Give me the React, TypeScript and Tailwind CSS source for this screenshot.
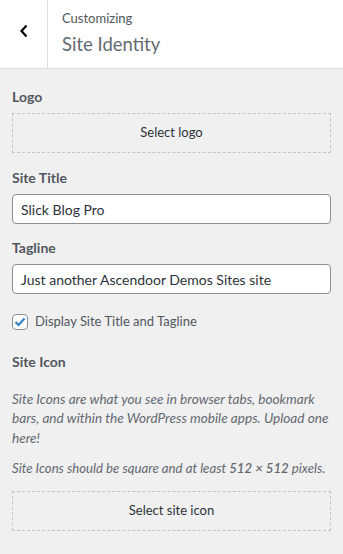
import React from "react";

const font = { fontFamily: 'Lato, "Noto Sans", sans-serif' };

export default function App() {
  return (
    <div className="w-[343px] h-[554px] bg-[#f0f0f1] overflow-hidden text-[#3c434a]" style={font}>
      <div className="flex h-[69px] bg-white border-b border-[#dcdcde]">
        <div className="w-[48px] flex items-center justify-center border-r border-[#dcdcde] pb-[6px]">
          <svg width="10" height="14" viewBox="0 0 10 14">
            <path d="M7.5 1.5 L2.5 7 L7.5 12.5" fill="none" stroke="#000" strokeWidth="2.2" />
          </svg>
        </div>
        <div className="flex flex-col pl-[14px] pt-[9px]">
          <span className="text-[13px] leading-[18px] text-[#50575e]">Customizing</span>
          <span className="text-[18.5px] leading-[26px] mt-[4px] text-[#646970]">Site Identity</span>
        </div>
      </div>
      <div className="px-[12px] pt-[18px]">
        <div className="text-[14px] font-bold leading-[20px] text-[#50575e]">Logo</div>
        <div className="mt-[6px] h-[40px] border border-dashed border-[#c3c4c7] flex items-center justify-center text-[13px] text-[#2c3338]">
          Select logo
        </div>
        <div className="mt-[15px] text-[14px] font-bold leading-[20px] text-[#50575e]">Site Title</div>
        <div className="mt-[6px] h-[30px] bg-white border border-[#8c8f94] rounded-[4px] flex items-center px-[8px] text-[14px] text-[#2c3338]">
          Slick Blog Pro
        </div>
        <div className="mt-[14px] text-[14px] font-bold leading-[20px] text-[#50575e]">Tagline</div>
        <div className="mt-[6px] h-[30px] bg-white border border-[#8c8f94] rounded-[4px] flex items-center px-[8px] text-[14px] text-[#2c3338]">
          Just another Ascendoor Demos Sites site
        </div>
        <label className="mt-[18px] flex items-center gap-[7px] text-[13px] text-[#50575e]">
          <span className="w-[16px] h-[16px] border border-[#8c8f94] rounded-[4px] bg-white flex items-center justify-center">
            <svg width="12" height="10" viewBox="0 0 12 10">
              <path d="M1.5 5 L4.5 8 L10.5 1.5" fill="none" stroke="#3582c4" strokeWidth="2.2" />
            </svg>
          </span>
          Display Site Title and Tagline
        </label>
        <div className="mt-[20px] text-[14px] font-bold leading-[20px] text-[#50575e]">Site Icon</div>
        <p className="mt-[18px] text-[13.6px] italic leading-[19.5px] text-[#646970]">
          Site Icons are what you see in browser tabs, bookmark bars, and within the WordPress mobile apps. Upload one here!
        </p>
        <p className="mt-[11px] text-[13.2px] italic leading-[19.5px] text-[#646970] whitespace-nowrap">
          Site Icons should be square and at least <strong className="font-semibold">512 × 512</strong> pixels.
        </p>
        <div className="mt-[12px] h-[40px] border border-dashed border-[#c3c4c7] flex items-center justify-center text-[13px] text-[#2c3338]">
          Select site icon
        </div>
      </div>
    </div>
  );
}
